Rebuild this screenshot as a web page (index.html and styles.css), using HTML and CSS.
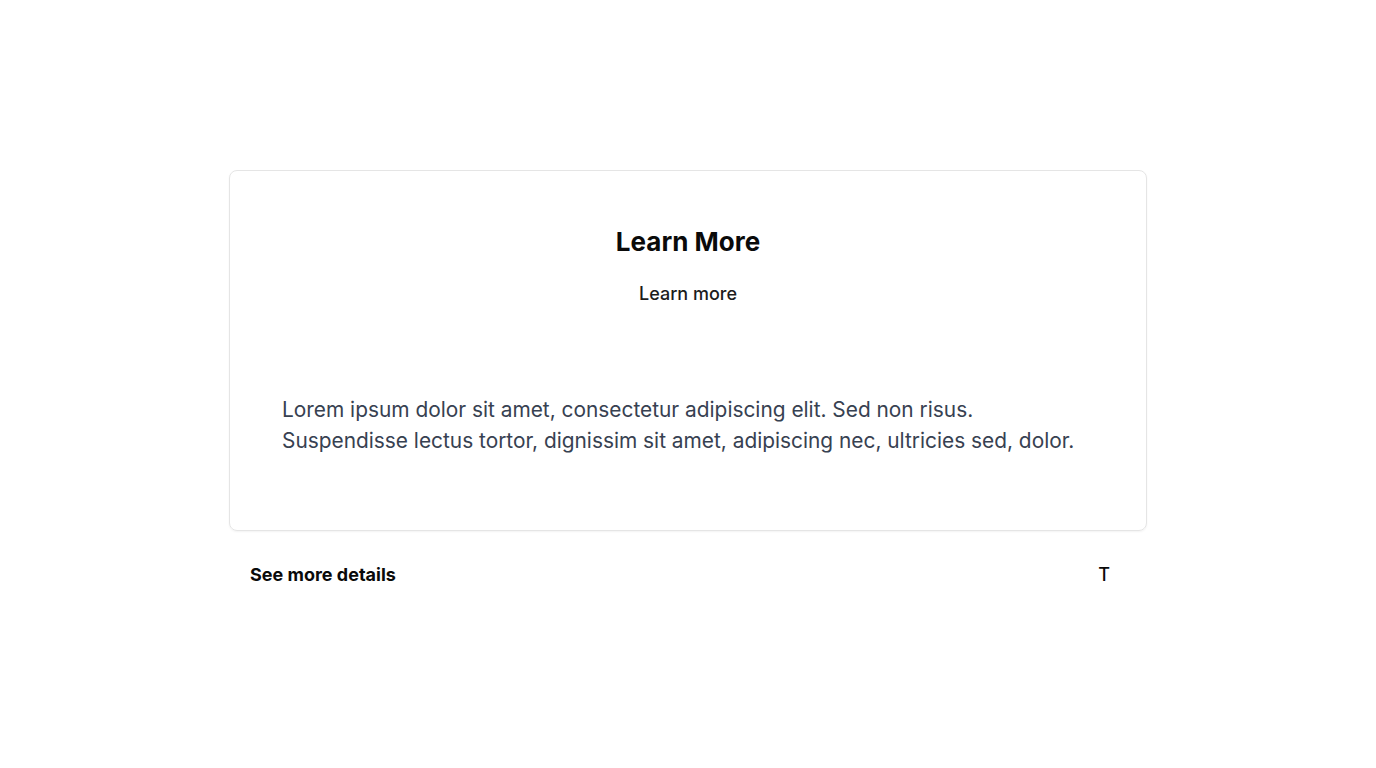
FILE: index.html
```html
<!DOCTYPE html>
<html lang="en">
<head>
<meta charset="utf-8">
<title>Learn More</title>
<link rel="stylesheet" href="styles.css">
</head>
<body>
<main class="page">
  <section class="card">
    <header class="card-head">
      <h1 class="title">Learn More</h1>
      <p class="subtitle">Learn more</p>
    </header>
    <p class="body-text">Lorem ipsum dolor sit amet, consectetur adipiscing elit. Sed non risus. Suspendisse lectus tortor, dignissim sit amet, adipiscing nec, ultricies sed, dolor.</p>
  </section>
  <footer class="details">
    <span class="details-label">See more details</span>
    <span class="details-mark">T</span>
  </footer>
</main>
</body>
</html>
```

FILE: styles.css
```css
* { box-sizing: border-box; }
html, body { margin: 0; padding: 0; background: #ffffff; }
body {
  font-family: Inter, "Noto Sans", "Liberation Sans", sans-serif;
  color: #0a0a0a;
}
.page {
  width: 918px;
  margin: 0 auto;
  padding-top: 170px;
}
.card {
  border: 1px solid #e5e5e5;
  border-radius: 8px;
  box-shadow: 0 1px 2px rgba(0,0,0,0.05);
  padding: 55px 52px 74px 52px;
  display: flex;
  flex-direction: column;
}
.card-head {
  display: flex;
  flex-direction: column;
  align-items: center;
  gap: 22px;
}
.title {
  margin: 0;
  font-size: 26px;
  line-height: 32px;
  font-weight: 700;
}
.subtitle {
  margin: 0;
  font-size: 18px;
  line-height: 28px;
  font-weight: 500;
  color: #1c1c1c;
}
.body-text {
  margin: 86px 0 0 0;
  font-size: 20.86px;
  line-height: 31px;
  color: #374151;
}
.details {
  display: flex;
  justify-content: space-between;
  align-items: center;
  padding: 0 37px 0 21px;
  margin-top: 31px;
  height: 24px;
}
.details-label {
  font-size: 18px;
  font-weight: 700;
  color: #0a0a0a;
}
.details-mark {
  font-size: 18px;
  font-weight: 500;
  color: #0a0a0a;
}
```
